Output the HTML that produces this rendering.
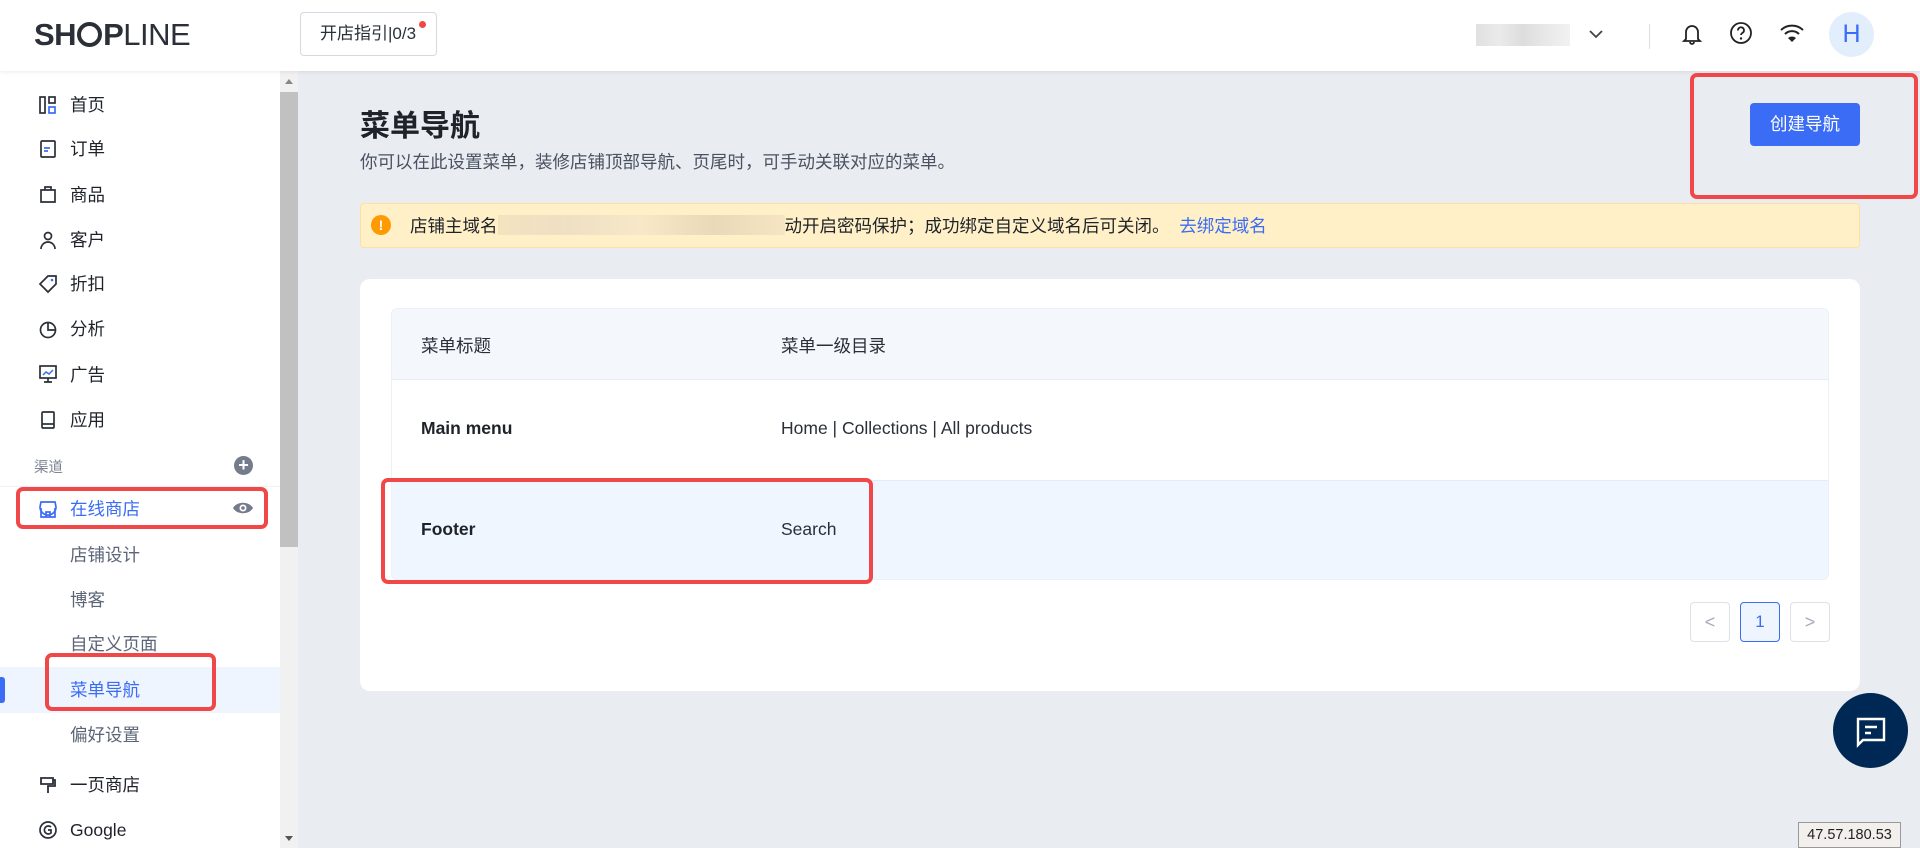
<!DOCTYPE html>
<html><head><meta charset="utf-8"><style>
*{box-sizing:border-box;margin:0;padding:0}
body{width:1920px;height:848px;overflow:hidden;background:#e9ecf1;font-family:"Liberation Sans","Noto Sans CJK SC",sans-serif;color:#1f2329;position:relative}
.a{position:absolute}
.hdr{left:0;top:0;width:1920px;height:71px;background:#fff;box-shadow:0 1px 4px rgba(0,0,0,.08);z-index:2}
.side{left:0;top:71px;width:280px;height:777px;background:#fff}
.sb{left:280px;top:71px;width:18px;height:777px;background:#f1f1f1}
.it{position:absolute;left:70px;font-size:17.5px;line-height:24px;color:#1f2329;white-space:nowrap}
.sub{color:#5c6577}
.ic{position:absolute;left:38px;width:20px;height:20px}
.red{position:absolute;border:4px solid #f04848;border-radius:7px;z-index:5}
</style></head><body>
<div class="a hdr">
 <div class="a" style="left:34px;top:17px;font-size:31px;font-weight:bold;color:#2a2f38;letter-spacing:-0.5px">SH<span style="display:inline-block;width:25px;height:25px;border:4px solid #2a2f38;border-radius:50%;vertical-align:-2px;margin:0 1px"></span>P<span style="font-weight:normal">LINE</span></div>
 <div class="a" style="left:300px;top:12px;width:137px;height:44px;border:1px solid #d4d8e0;border-radius:4px;font-size:17px;line-height:42px;padding-left:19px;color:#2a2f38">开店指引|0/3</div>
 <div class="a" style="left:419px;top:21px;width:7px;height:7px;border-radius:50%;background:#f04848"></div>
 <div class="a" style="left:1476px;top:24px;width:94px;height:22px;background:linear-gradient(90deg,#ddd,#e8e8e8,#d9d9d9,#e6e6e6,#f0f0f0);opacity:.9"></div>
 <svg class="a" style="left:1588px;top:28px" width="16" height="12"><path d="M2 3l6 6 6-6" fill="none" stroke="#444" stroke-width="1.8"/></svg>
 <div class="a" style="left:1649px;top:24px;width:1px;height:25px;background:#ddd"></div>
 <svg class="a" style="left:1681px;top:22px" width="22" height="24"><path d="M5 17V10a6 6 0 0112 0v7l2 2H3z M9 20a2 2 0 004 0" fill="none" stroke="#222" stroke-width="1.8"/></svg>
 <svg class="a" style="left:1729px;top:21px" width="24" height="24"><circle cx="12" cy="12" r="10" fill="none" stroke="#222" stroke-width="1.8"/><path d="M9 9.5a3 3 0 115 2c-1 .7-2 1.2-2 2.5" fill="none" stroke="#222" stroke-width="1.8"/><circle cx="12" cy="17.5" r="1.2" fill="#222"/></svg>
 <svg class="a" style="left:1779px;top:22px" width="26" height="22"><path d="M2 8a16 16 0 0122 0M6 12a10 10 0 0114 0" fill="none" stroke="#222" stroke-width="2"/><path d="M9 16l4 4 4-4a6 6 0 00-8 0z" fill="#222"/></svg>
 <div class="a" style="left:1829px;top:12px;width:45px;height:45px;border-radius:50%;background:#e3eefd;color:#3b6cf6;font-size:25px;line-height:45px;text-align:center">H</div>
</div>
<div class="a side">
 <div class="it" style="top:22px">首页</div>
 <div class="it" style="top:66px">订单</div>
 <div class="it" style="top:112px">商品</div>
 <div class="it" style="top:157px">客户</div>
 <div class="it" style="top:201px">折扣</div>
 <div class="it" style="top:246px">分析</div>
 <div class="it" style="top:292px">广告</div>
 <div class="it" style="top:337px">应用</div>
 <div class="it" style="top:385px;left:34px;font-size:14.5px;color:#7d8594">渠道</div>
 <div class="a" style="left:234px;top:385px;width:19px;height:19px;border-radius:50%;background:#747c8c;color:#fff;text-align:center;line-height:18px;font-size:18px;font-weight:bold">+</div>
 <div class="a" style="left:0;top:415px;width:280px;height:1px;background:#eef0f3"></div>
 <div class="it" style="top:426px;color:#3b6cf6">在线商店</div>
 <svg class="a" style="left:232px;top:428px" width="22" height="18"><path d="M1 9C5 2 17 2 21 9 17 16 5 16 1 9z" fill="#747c8c"/><circle cx="11" cy="9" r="3.5" fill="#fff"/><circle cx="11" cy="9" r="1.8" fill="#747c8c"/></svg>
 <div class="it sub" style="top:472px">店铺设计</div>
 <div class="it sub" style="top:517px">博客</div>
 <div class="it sub" style="top:561px">自定义页面</div>
 <div class="a" style="left:0;top:596px;width:280px;height:46px;background:#eef5fe"></div>
 <div class="a" style="left:0;top:606px;width:5px;height:26px;background:#3b6cf6;border-radius:0 3px 3px 0"></div>
 <div class="it" style="top:607px;color:#3b6cf6">菜单导航</div>
 <div class="it sub" style="top:652px">偏好设置</div>
 <div class="it" style="top:702px">一页商店</div>
 <div class="it" style="top:747px">Google</div>
 <svg class="ic" style="top:24px" viewBox="0 0 20 20"><rect x="2" y="2" width="5" height="16" fill="none" stroke="#2a2f38" stroke-width="1.7"/><rect x="11" y="2" width="6" height="6" fill="none" stroke="#2a2f38" stroke-width="1.7"/><rect x="11" y="12" width="6" height="6" fill="none" stroke="#3b6cf6" stroke-width="1.7"/></svg>
 <svg class="ic" style="top:68px" viewBox="0 0 20 20"><rect x="3" y="2" width="14" height="16" rx="1" fill="none" stroke="#2a2f38" stroke-width="1.7"/><path d="M6 9h6M6 12h4" stroke="#3b6cf6" stroke-width="1.7"/></svg>
 <svg class="ic" style="top:113px" viewBox="0 0 20 20"><path d="M3 6h14v12H3z M7 6V3h6v3" fill="none" stroke="#2a2f38" stroke-width="1.7"/></svg>
 <svg class="ic" style="top:159px" viewBox="0 0 20 20"><circle cx="10" cy="6" r="3.5" fill="none" stroke="#2a2f38" stroke-width="1.7"/><path d="M3 19a7 7 0 0114 0" fill="none" stroke="#2a2f38" stroke-width="1.7"/></svg>
 <svg class="ic" style="top:203px" viewBox="0 0 20 20"><path d="M10 2h8v8l-8 8-8-8z" fill="none" stroke="#2a2f38" stroke-width="1.7"/><circle cx="14" cy="6" r="1.3" fill="#3b6cf6"/></svg>
 <svg class="ic" style="top:248px" viewBox="0 0 20 20"><circle cx="10" cy="11" r="7.5" fill="none" stroke="#2a2f38" stroke-width="1.7"/><path d="M10 3v8h8" fill="none" stroke="#2a2f38" stroke-width="1.7"/></svg>
 <svg class="ic" style="top:293px" viewBox="0 0 20 20"><rect x="2" y="2" width="16" height="12" fill="none" stroke="#2a2f38" stroke-width="1.7"/><path d="M10 14v4M6 18h8" stroke="#2a2f38" stroke-width="1.7"/><path d="M5 11l3-3 3 2 4-4" fill="none" stroke="#3b6cf6" stroke-width="1.5"/></svg>
 <svg class="ic" style="top:339px" viewBox="0 0 20 20"><rect x="4" y="2" width="12" height="16" rx="1" fill="none" stroke="#2a2f38" stroke-width="1.7"/><path d="M4 14h12" stroke="#2a2f38" stroke-width="1.7"/></svg>
 <svg class="ic" style="top:428px" viewBox="0 0 20 20"><path d="M3 3h14l1 5a3 3 0 01-16 0z M3 9v9h14V9 M8 18v-5h4v5" fill="none" stroke="#3b6cf6" stroke-width="1.7"/></svg>
 <svg class="ic" style="top:704px" viewBox="0 0 20 20"><path d="M3 3h12v6H3z M15 5h2v6h-7v7" fill="none" stroke="#2a2f38" stroke-width="1.8"/></svg>
 <svg class="ic" style="top:749px" viewBox="0 0 20 20"><circle cx="10" cy="10" r="8" fill="none" stroke="#2a2f38" stroke-width="1.7"/><path d="M13 7a4 4 0 100 6V10h-3" fill="none" stroke="#2a2f38" stroke-width="1.7"/></svg>
</div>
<div class="a sb"><div class="a" style="left:0;top:21px;width:18px;height:455px;background:#c1c1c1"></div>
<div class="a" style="left:5px;top:8px;width:0;height:0;border:4px solid transparent;border-bottom:5px solid #888;border-top:0"></div>
<div class="a" style="left:5px;top:765px;width:0;height:0;border:4px solid transparent;border-top:5px solid #555;border-bottom:0"></div></div>

<div class="a" style="left:360px;top:101px;font-size:30px;font-weight:bold;color:#1f2329">菜单导航</div>
<div class="a" style="left:360px;top:149px;font-size:17.5px;color:#4a5160">你可以在此设置菜单，装修店铺顶部导航、页尾时，可手动关联对应的菜单。</div>
<div class="a" style="left:1750px;top:103px;width:110px;height:43px;background:#3b6cf6;border-radius:4px;color:#fff;font-size:17.5px;line-height:43px;text-align:center">创建导航</div>

<div class="a" style="left:360px;top:203px;width:1500px;height:45px;background:#fff0c8;border:1px solid #ffe0a2;border-radius:4px"></div>
<div class="a" style="left:371px;top:215px;width:20px;height:20px;border-radius:50%;background:#ff9a00;color:#fff;font-size:14px;text-align:center;line-height:20px;font-weight:bold">!</div>
<div class="a" style="left:410px;top:213px;font-size:17.5px;color:#1f2329;white-space:nowrap">店铺主域名<span style="display:inline-block;width:287px;height:20px;background:linear-gradient(90deg,#f4e2bf,#efe0c4,#f7e8c8,#ead9b8,#f6e4c2);vertical-align:-3px"></span>动开启密码保护；成功绑定自定义域名后可关闭。 &nbsp;<span style="color:#3b6cf6">去绑定域名</span></div>

<div class="a" style="left:360px;top:279px;width:1500px;height:412px;background:#fff;border-radius:10px"></div>
<div class="a" style="left:391px;top:308px;width:1438px;height:272px;border:1px solid #edf0f4;border-radius:6px;overflow:hidden;background:#fff">
 <div class="a" style="left:0;top:0;width:100%;height:71px;background:#f4f7fc;border-bottom:1px solid #e8ecf2"></div>
 <div class="a" style="left:0;top:171px;width:100%;height:101px;background:#eff6ff;border-top:1px solid #e8ecf2"></div>
</div>
<div class="a" style="left:421px;top:333px;font-size:17.5px;color:#2a2f38">菜单标题</div>
<div class="a" style="left:781px;top:333px;font-size:17.5px;color:#2a2f38">菜单一级目录</div>
<div class="a" style="left:421px;top:418px;font-size:17.5px;font-weight:bold">Main menu</div>
<div class="a" style="left:781px;top:418px;font-size:17.5px;color:#2a2f38">Home | Collections | All products</div>
<div class="a" style="left:421px;top:519px;font-size:17.5px;font-weight:bold">Footer</div>
<div class="a" style="left:781px;top:519px;font-size:17.5px;color:#2a2f38">Search</div>

<div class="a" style="left:1690px;top:602px;width:40px;height:40px;border:1px solid #dde1e8;border-radius:4px;color:#aab;text-align:center;line-height:38px;font-size:18px">&lt;</div>
<div class="a" style="left:1740px;top:602px;width:40px;height:40px;border:1px solid #3b6cf6;border-radius:4px;background:#eef5ff;color:#3b6cf6;text-align:center;line-height:38px;font-size:17px">1</div>
<div class="a" style="left:1790px;top:602px;width:40px;height:40px;border:1px solid #dde1e8;border-radius:4px;color:#aab;text-align:center;line-height:38px;font-size:18px">&gt;</div>

<div class="a" style="left:1833px;top:693px;width:75px;height:75px;border-radius:50%;background:#002855"></div>
<svg class="a" style="left:1855px;top:716px" width="32" height="32" viewBox="0 0 32 32"><path d="M3 3h26v21H8l-5 5z" fill="none" stroke="#fff" stroke-width="2.4"/><path d="M10 11h12M10 17h6" stroke="#fff" stroke-width="2.4"/></svg>
<div class="a" style="left:1798px;top:822px;width:103px;height:26px;border:1px solid #999;background:#f3efec;font-size:14.5px;line-height:25px;text-align:center;color:#222">47.57.180.53</div>

<div class="red" style="left:16px;top:487px;width:252px;height:42px"></div>
<div class="red" style="left:45px;top:653px;width:171px;height:58px"></div>
<div class="red" style="left:1690px;top:73px;width:228px;height:126px"></div>
<div class="red" style="left:381px;top:478px;width:492px;height:106px"></div>
</body></html>
